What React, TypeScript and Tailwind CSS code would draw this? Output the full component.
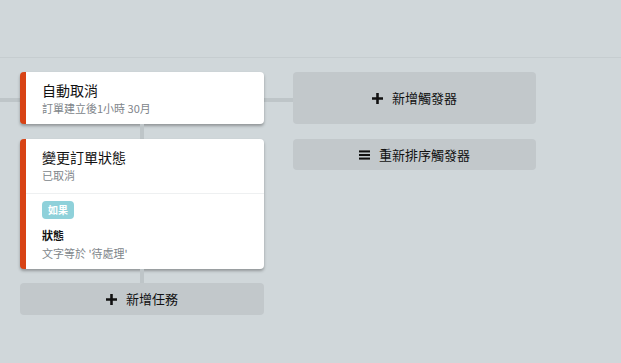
const FONT = "font-['Noto_Sans_CJK_TC','Noto_Sans',sans-serif]";

function PlusIcon() {
  return (
    <svg width="11" height="11" viewBox="0 0 12 12" className="shrink-0">
      <path d="M4.6 0h2.8v4.6H12v2.8H7.4V12H4.6V7.4H0V4.6h4.6z" fill="#111" />
    </svg>
  );
}

function BarsIcon() {
  return (
    <svg width="11" height="10" viewBox="0 0 12 10" className="shrink-0">
      <rect x="0" y="0" width="12" height="2.2" fill="#111" />
      <rect x="0" y="3.9" width="12" height="2.2" fill="#111" />
      <rect x="0" y="7.8" width="12" height="2.2" fill="#111" />
    </svg>
  );
}

function Connector() {
  return <div className="mx-auto h-[15px] w-[4px] bg-[#bec5c8]" />;
}

type CardHeadProps = { title: string; sub: string; pb?: string };

function CardHead({ title, sub, pb = "pb-2" }: CardHeadProps) {
  return (
    <div className={`pl-4 pr-4 pt-2 ${pb}`}>
      <p className="text-[14px] leading-5 text-[#111]">{title}</p>
      <p className="text-[11px] leading-4 text-[#80858a]">{sub}</p>
    </div>
  );
}

export default function App() {
  return (
    <div className={`${FONT} relative h-[363px] w-[621px] overflow-hidden bg-[#d0d7da]`}>
      <div className="h-[58px] border-b border-[#c6cdd0]" />

      {/* horizontal connector behind the trigger row */}
      <div className="absolute left-0 top-[98px] h-[4px] w-[293px] bg-[#bec5c8]" />

      <div className="relative flex gap-[29px] px-5 pt-[14px]">
        <div className="flex w-[244px] flex-col">
          <div className="overflow-hidden rounded-[4px] border-l-[6px] border-[#d84315] bg-white shadow-[0_2px_3px_rgba(0,0,0,0.3)]">
            <CardHead title="自動取消" sub="訂單建立後1小時 30月" />
          </div>
          <Connector />
          <div className="overflow-hidden rounded-[4px] border-l-[6px] border-[#d84315] bg-white shadow-[0_2px_3px_rgba(0,0,0,0.3)]">
            <CardHead title="變更訂單狀態" sub="已取消" pb="pb-[10px]" />
            <div className="flex flex-col items-start border-t border-[#eef0f1] pb-2 pl-4 pt-[7px]">
              <span className="flex h-[18px] w-[32px] items-center justify-center rounded-[4px] bg-[#8fd1da] text-[10px] font-bold leading-none text-white">
                如果
              </span>
              <p className="mt-2 text-[11px] font-bold leading-4 text-[#111]">狀態</p>
              <p className="mt-[2px] text-[11px] leading-4 text-[#80858a]">文字等於 '待處理'</p>
            </div>
          </div>
          <div className="mx-auto h-[14px] w-[4px] bg-[#bec5c8]" />
          <button
            type="button"
            className="flex h-[32px] items-center justify-center gap-[9px] rounded-[4px] bg-[#c2c8cb] text-[13px] text-[#111]"
          >
            <PlusIcon />
            新增任務
          </button>
        </div>

        <div className="flex w-[243px] flex-col gap-[15px]">
          <button
            type="button"
            className="flex h-[52px] items-center justify-center gap-[9px] rounded-[4px] bg-[#c2c8cb] text-[13px] text-[#111]"
          >
            <PlusIcon />
            新增觸發器
          </button>
          <button
            type="button"
            className="flex h-[31px] items-center justify-center gap-[9px] rounded-[4px] bg-[#c2c8cb] text-[13px] text-[#111]"
          >
            <BarsIcon />
            重新排序觸發器
          </button>
        </div>
      </div>
    </div>
  );
}
